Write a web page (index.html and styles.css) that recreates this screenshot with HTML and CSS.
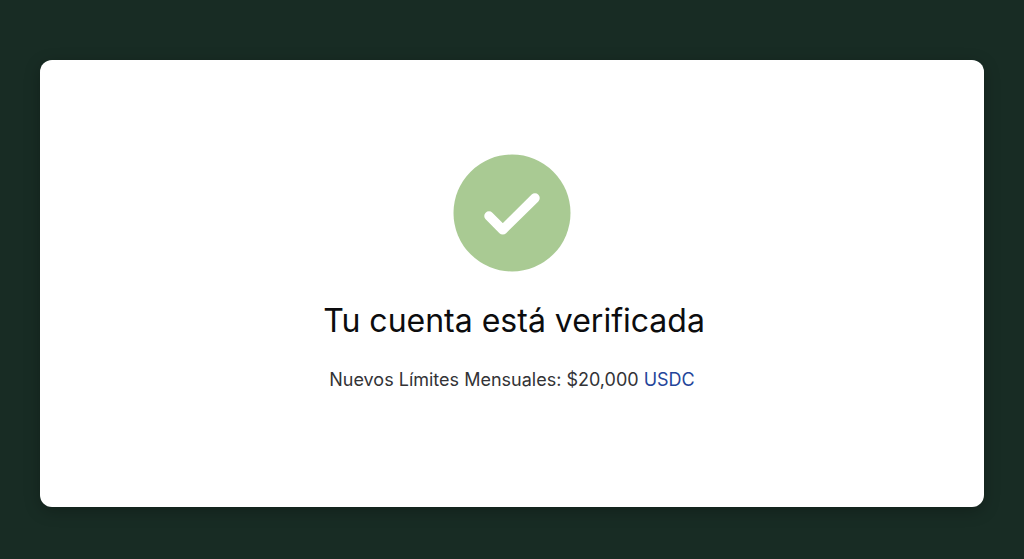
FILE: index.html
```html
<!DOCTYPE html>
<html lang="es">
<head>
<meta charset="utf-8">
<meta name="viewport" content="width=device-width, initial-scale=1">
<title>Cuenta verificada</title>
<link rel="stylesheet" href="styles.css">
</head>
<body class="page">
<main class="card">
<svg class="badge" viewBox="0 0 118 118" aria-hidden="true">
<circle cx="59" cy="59" r="58.5" fill="#a9ca93"/>
<path d="M36 62 L49.8 75.8 L82 44" fill="none" stroke="#fff" stroke-width="9.5" stroke-linecap="round" stroke-linejoin="round"/>
</svg>
<h1 class="title">Tu cuenta está verificada</h1>
<p class="limits">Nuevos Límites Mensuales: $20,000 <span class="currency">USDC</span></p>
</main>
</body>
</html>
```
FILE: styles.css
```css
* { box-sizing: border-box; }
.page {
  margin: 0;
  min-height: 100vh;
  padding: 60px 40px 52px;
  display: flex;
  background: #182c24;
  font-family: Inter, "Liberation Sans", sans-serif;
}
.card {
  flex: 1;
  display: flex;
  flex-direction: column;
  align-items: center;
  padding: 94px 24px;
  background: #fff;
  border-radius: 12px;
  box-shadow: 0 4px 16px rgba(0, 0, 0, 0.25);
  text-align: center;
}
.badge { width: 118px; height: 118px; }
.title {
  margin: 29px 0 0;
  padding-left: 4px;
  font-size: 32px;
  line-height: 40px;
  font-weight: 400;
  color: #0c0c0e;
}
.limits {
  margin: 27px 0 0;
  font-size: 18px;
  line-height: 24px;
  color: #333336;
}
.currency { color: #24459a; }
```
